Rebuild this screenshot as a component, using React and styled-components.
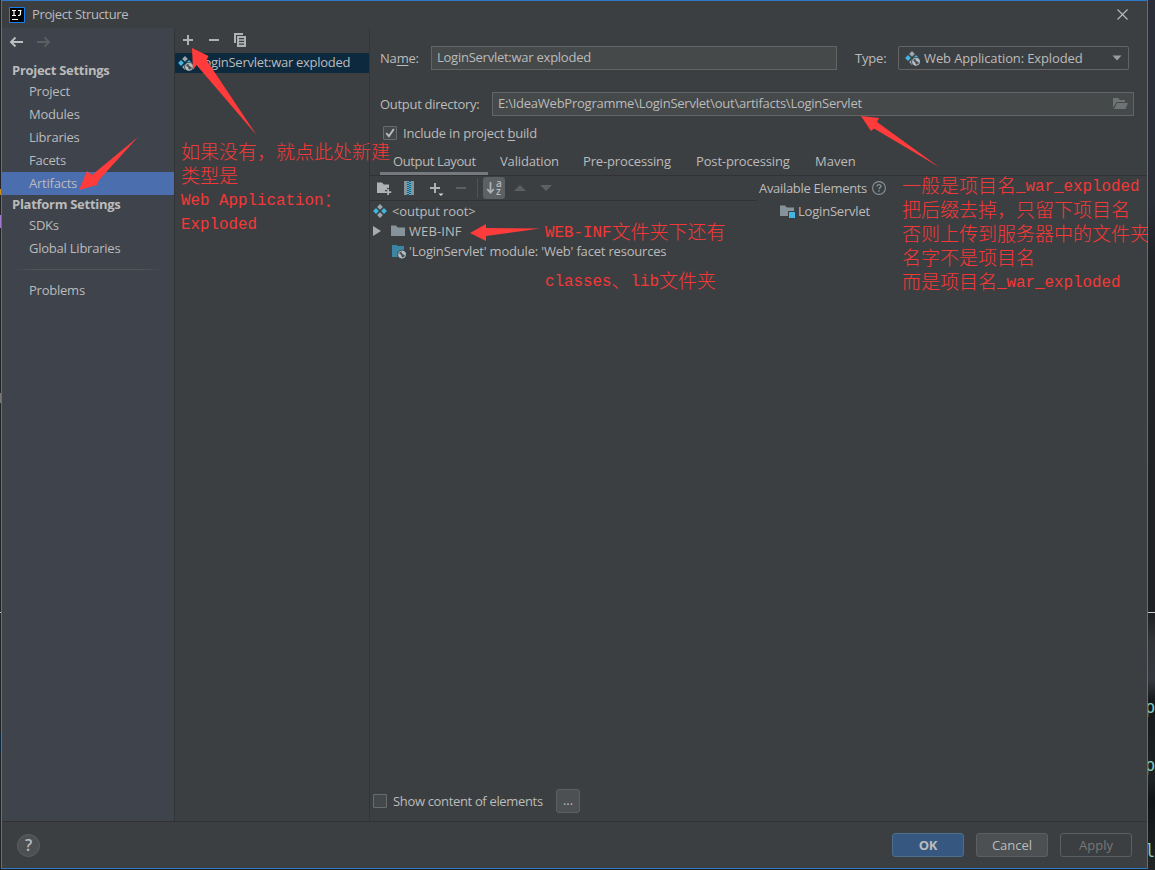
import React, { useState } from 'react';
import styled, { createGlobalStyle } from 'styled-components';

const projectSettings = ['Project', 'Modules', 'Libraries', 'Facets', 'Artifacts'];
const platformSettings = ['SDKs', 'Global Libraries'];

const tabs = [
  { name: 'Output Layout', width: 108, spacing: -0.38 },
  { name: 'Validation', width: 83, spacing: -0.15 },
  { name: 'Pre-processing', width: 113, spacing: -0.15 },
  { name: 'Post-processing', width: 119, spacing: -0.15 },
  { name: 'Maven', width: 66, spacing: 0 },
];

function ArtifactIcon({ web }) {
  return (
    <svg width="16" height="16" viewBox={web ? '1 0 16 16' : '0 0 16 16'}>
      <path d="M8 1l2.900 2.900L8 6.800 5.100 3.900z" fill="#9aa7b0" />
      <path d="M4 5.100L6.900 8 4 10.900 1.100 8z" fill="#40b6e0" />
      <path d="M12 5.100L14.900 8 12 10.900 9.100 8z" fill="#40b6e0" />
      <path d="M8 9.200l2.900 2.900L8 15l-2.900-2.900z" fill="#9aa7b0" />
      {web && <GlobeShape cx={12} cy={11.7} />}
    </svg>
  );
}

function GlobeShape({ cx, cy }) {
  return (
    <g transform={`translate(${cx} ${cy})`}>
      <circle r="4.8" fill="#33404a" />
      <circle r="3.6" fill="#4c5154" stroke="#b4bdc3" strokeWidth="1" />
      <path d="M-3.500-1.200L-1 .2l.4 1.600L.5 3.400-.6 3.800-2.800 2.500zM.2-3.500L-.6-1.800.8-.6 2.200.6l1.200-.4V-1.800L1.800-3.300z" fill="#b4bdc3" />
    </g>
  );
}

function FolderIcon({ kind }) {
  const fill = kind === 'add' ? '#afb1b3' : '#87939a';
  return (
    <svg width="16" height="16" viewBox="0 0 16 16">
      {kind === 'add' && (
        <path d="M1 2.500h5l1.800 2H13V8h-2v2H9v3H1zM11.200 9H13v2.200h2.200V13H13v2h-1.800v-2H9v-1.800h2.200z" fill={fill} />
      )}
      {kind === 'module' && (
        <g>
          <path d="M1 2.500h5l1.800 2H15V8H9v5H1z" fill={fill} />
          <path d="M10 9h6v6h-6z" fill="#40b6e0" />
        </g>
      )}
      {!kind && <path d="M1 2.500h5l1.800 2H15V13H1z" fill={fill} />}
    </svg>
  );
}

function CheckBox({ checked }) {
  return (
    <Box>
      {checked && (
        <svg width="12" height="12" viewBox="0 0 12 12">
          <path d="M2.300 6.200l2.600 3L9.800 2" fill="none" stroke="#bbbbbb" strokeWidth="1.900" />
        </svg>
      )}
    </Box>
  );
}

function Sidebar({ selected, onSelect }) {
  const item = (name) => (
    <SideItem key={name} $active={selected === name} onClick={() => onSelect(name)}>
      {name}
    </SideItem>
  );
  return (
    <Side>
      <History>
        <svg width="15" height="12" viewBox="0 0 15 12">
          <path d="M14 6H2M6.500 1.500L2 6l4.500 4.500" fill="none" stroke="#bdbfc1" strokeWidth="1.900" />
        </svg>
        <svg width="15" height="12" viewBox="0 0 15 12">
          <path d="M1 6h12M8.500 1.500L13 6l-4.500 4.500" fill="none" stroke="#5c5e61" strokeWidth="1.900" />
        </svg>
      </History>
      <SideTitle>Project Settings</SideTitle>
      {projectSettings.map(item)}
      <SideTitle>Platform Settings</SideTitle>
      {platformSettings.map(item)}
      <SideLine />
      {item('Problems')}
    </Side>
  );
}

function ArtifactList() {
  return (
    <List>
      <ListTools>
        <svg width="12" height="12" viewBox="0 0 12 12">
          <path d="M5 1h2v4h4v2H7v4H5V7H1V5h4z" fill="#afb1b3" />
        </svg>
        <svg width="12" height="12" viewBox="0 0 12 12">
          <path d="M1 5h10v2H1z" fill="#afb1b3" />
        </svg>
        <svg width="14" height="14" viewBox="0 0 14 14">
          <path d="M1 0h9v2H3v8H1z" fill="#afb1b3" />
          <path d="M4 3h9v11H4zM6 5v1.200h5V5zM6 7.800V9h5V7.800zM6 10.600v1.200h5v-1.200z" fill="#afb1b3" fillRule="evenodd" />
        </svg>
      </ListTools>
      <ListItem>
        <ArtifactIcon web />
        <Text $spacing={-0.28}>LoginServlet:war exploded</Text>
      </ListItem>
    </List>
  );
}

function LayoutTools() {
  return (
    <Tools>
      <FolderIcon kind="add" />
      <Tool $shift={-1} width="16" height="16" viewBox="0 0 16 16">
        <path d="M3 1h10v14H3z" fill="#87939a" />
        <path d="M6 1h4v14H6z" fill="#315665" />
        <path d="M7 1v14M9 2v14" stroke="#40b6e0" strokeWidth="2" strokeDasharray="1 1" />
      </Tool>
      <Tool $shift={2} width="16" height="16" viewBox="0 0 16 16">
        <path d="M5 3h2v4h4v2H7v4H5V9H1V7h4z" fill="#afb1b3" />
        <path d="M9.500 13.500h5L12 16z" fill="#d5d6d7" />
      </Tool>
      <svg width="16" height="16" viewBox="0 0 16 16">
        <path d="M1 7h10v2H1z" fill="#5d6062" />
      </svg>
      <ToolLine />
      <SortButton>
        <svg width="9" height="14" viewBox="0 0 9 14">
          <path d="M4.500 1v10M1.200 8.200l3.300 3.500 3.300-3.500" fill="none" stroke="#afb1b3" strokeWidth="1.700" />
        </svg>
        <SortLetters>
          <span>a</span>
          <span>z</span>
        </SortLetters>
      </SortButton>
      <Tool $shift={-1} width="12" height="6" viewBox="0 0 12 6">
        <path d="M0 6l6-6 6 6z" fill="#5d6062" />
      </Tool>
      <Tool $shift={4} width="12" height="6" viewBox="0 0 12 6">
        <path d="M0 0l6 6 6-6z" fill="#5d6062" />
      </Tool>
    </Tools>
  );
}

function Editor() {
  const [tab, setTab] = useState('Output Layout');
  return (
    <Main>
      <NameRow>
        <Label $width={51}>
          Na<u>m</u>e:
        </Label>
        <Field $width={406}>
          <Text $spacing={-0.25}>LoginServlet:war exploded</Text>
        </Field>
        <TypeLabel>Type:</TypeLabel>
        <Select>
          <ArtifactIcon web />
          <Text $spacing={-0.12}>Web Application: Exploded</Text>
          <svg width="10" height="6" viewBox="0 0 10 6">
            <path d="M.5.500h9L5 5.500z" fill="#9a9da0" />
          </svg>
        </Select>
      </NameRow>
      <DirRow>
        <Label $width={112}>
          <Text $spacing={-0.3}>Output directory:</Text>
        </Label>
        <Field $width={642}>
          <Text $spacing={-0.24}>E:\IdeaWebProgramme\LoginServlet\out\artifacts\LoginServlet</Text>
          <svg width="16" height="12" viewBox="0 0 16 12">
            <path d="M1 0h5l2 2h5v2H4.500L1 10z" fill="#6e7375" />
            <path d="M5 5h11l-2.500 6H2z" fill="#6e7375" />
          </svg>
        </Field>
      </DirRow>
      <BuildRow>
        <CheckBox checked />
        <span>
          Include in project <u>b</u>uild
        </span>
      </BuildRow>
      <Tabs>
        {tabs.map((t) => (
          <Tab key={t.name} $width={t.width} $spacing={t.spacing} $active={t.name === tab} onClick={() => setTab(t.name)}>
            {t.name}
          </Tab>
        ))}
      </Tabs>
      <Panes>
        <Pane $width={387}>
          <LayoutTools />
          <TreeRow $indent={2} $gap={4}>
            <ArtifactIcon />
            <Text $spacing={-0.1}>&lt;output root&gt;</Text>
          </TreeRow>
          <TreeRow $indent={3} $gap={3}>
            <Expander width="8" height="10" viewBox="0 0 8 10">
              <path d="M0 0l8 5-8 5z" fill="#a9abad" />
            </Expander>
            <FolderIcon />
            <Text $spacing={0.1}>WEB-INF</Text>
          </TreeRow>
          <TreeRow $indent={21} $gap={2}>
            <svg width="16" height="16" viewBox="0 0 16 16">
              <path d="M1 2h5v1h7v11H1z" fill="#3b86a5" />
              <GlobeShape cx={11} cy={11.5} />
            </svg>
            <Text $spacing={-0.19}>'LoginServlet' module: 'Web' facet resources</Text>
          </TreeRow>
        </Pane>
        <Pane>
          <Available>
            <Text $spacing={-0.31}>Available Elements</Text>
            <svg width="14" height="14" viewBox="0 0 14 14">
              <circle cx="7" cy="7" r="6.400" fill="none" stroke="#87939a" strokeWidth="1.100" />
              <path d="M5 5.500C5 3 9 3 9 5.300 9 6.700 7 6.600 7 8.300M7 9.300v1.500" fill="none" stroke="#87939a" strokeWidth="1.300" />
            </svg>
          </Available>
          <TreeRow $indent={22} $gap={3}>
            <FolderIcon kind="module" />
            <span>LoginServlet</span>
          </TreeRow>
        </Pane>
      </Panes>
      <ContentRow>
        <CheckBox />
        <ContentLabel>Show content of elements</ContentLabel>
        <MoreButton>...</MoreButton>
      </ContentRow>
    </Main>
  );
}

function Notes() {
  return (
    <>
      <Arrows width="1155" height="870" viewBox="0 0 1155 870">
        <path d="M192 48l16.500 8-2 4 50 75-60-70-3.500 5z" />
        <path d="M79 190l8-19 5 4 46-38-39 43-2 5z" />
        <path d="M470 233l16-9v4l54 .500-54 7.500v5z" />
        <path d="M861 116l18 2-2 4 62 45-65-38.500-3 2.500z" />
      </Arrows>
      <Note $x={181} $y={139}>
        <p>如果没有，就点此处新建</p>
        <p>类型是</p>
        <p><b>Web Application</b>：</p>
        <p><b>Exploded</b></p>
      </Note>
      <Note $x={545} $y={219}>
        <p><b>WEB-INF</b>文件夹下还有</p>
      </Note>
      <Note $x={545} $y={268}>
        <p><b>classes</b>、<b>lib</b>文件夹</p>
      </Note>
      <Note $x={902} $y={173}>
        <p>一般是项目名<b>_war_exploded</b></p>
        <p>把后缀去掉，只留下项目名</p>
        <p>否则上传到服务器中的文件夹</p>
        <p>名字不是项目名</p>
        <p>而是项目名<b>_war_exploded</b></p>
      </Note>
    </>
  );
}

function App() {
  const [selected, setSelected] = useState('Artifacts');
  return (
    <Desktop>
      <GlobalStyle />
      <LeftEdge>
        <Speck $top={189} $height={6} $color="#d08a10" />
        <Speck $top={215} $height={13} $color="#a678cf" />
        <Speck $top={393} $height={10} $color="#777777" />
        <Speck $top={612} $height={1} $color="#cccccc" />
        <Speck $top={733} $height={20} $color="#0d293e" />
      </LeftEdge>
      <Dialog>
        <TitleBar>
          <Logo width="16" height="16" viewBox="0 0 16 16">
            <path d="M.5.500h15v15H.5z" fill="#000" stroke="#1d7dea" />
            <path d="M3 3.500h4M5 3.500v4.500M3 8.500h4M9 3.500h3.500M11.500 3.500V7q0 1.500-2.500 1.500M3 12.500h6" fill="none" stroke="#fff" strokeWidth="1.200" />
          </Logo>
          <Title>Project Structure</Title>
          <svg width="11" height="11" viewBox="0 0 11 11">
            <path d="M.5.500l10 10M10.500.500l-10 10" stroke="#bbbbbb" strokeWidth="1.100" />
          </svg>
        </TitleBar>
        <Body>
          <Sidebar selected={selected} onSelect={setSelected} />
          <ArtifactList />
          <Editor />
        </Body>
        <Footer>
          <Help>?</Help>
          <Button $primary>OK</Button>
          <Button>Cancel</Button>
          <Button $disabled>Apply</Button>
        </Footer>
      </Dialog>
      <RightEdge>
        <Speck $top={612} $height={1} $color="#cccccc" />
        <EdgeLetter $top={697}>p</EdgeLetter>
        <EdgeLetter $top={755}>p</EdgeLetter>
        <EdgeLetter $top={841}>l</EdgeLetter>
      </RightEdge>
      <Notes />
    </Desktop>
  );
}

export default App;

const GlobalStyle = createGlobalStyle`
  * {
    box-sizing: border-box;
  }
  body {
    margin: 0;
    background: #1e2023;
    overflow: hidden;
  }
  svg {
    display: block;
    flex: none;
  }
  p {
    margin: 0;
  }
  u {
    text-underline-offset: 2px;
  }
`;

const Desktop = styled.div`
  position: relative;
  display: flex;
  width: 1155px;
  height: 870px;
  overflow: hidden;
  background: #1e2023;
  font-family: 'Open Sans', 'Noto Sans', sans-serif;
  font-size: 13px;
  letter-spacing: -0.2px;
  line-height: 20px;
  color: #bbbbbb;
  white-space: nowrap;
`;

const LeftEdge = styled.div`
  position: relative;
  width: 1px;
  background: #222426;
`;

const RightEdge = styled.div`
  position: relative;
  flex: 1;
  overflow: hidden;
  background: linear-gradient(#2b2e39 0, #292d36 200px, #202226 260px, #1e2023 612px, #303236 640px, #34383e 680px, #16191b 700px, #1c2124 780px, #101315 800px, #222526 870px);
`;

const Speck = styled.div`
  position: absolute;
  left: 0;
  right: 0;
  top: ${(props) => props.$top}px;
  height: ${(props) => props.$height}px;
  background: ${(props) => props.$color};
`;

const EdgeLetter = styled.div`
  position: absolute;
  left: -3px;
  top: ${(props) => props.$top}px;
  font: 17px/20px 'DejaVu Sans Mono', monospace;
  color: #80cbc4;
`;

const Dialog = styled.div`
  display: flex;
  flex-direction: column;
  width: 1147px;
  height: 869px;
  border: 1px solid #3078c8;
  background: #3c3f41;
`;

const Text = styled.span`
  letter-spacing: ${(props) => props.$spacing}px;
`;

const TitleBar = styled.div`
  display: flex;
  align-items: center;
  height: 27px;
  padding: 0 19px 0 7px;
`;

const Logo = styled.svg`
  margin-right: 7px;
`;

const Title = styled.span`
  flex: 1;
  padding-bottom: 1px;
  letter-spacing: -0.36px;
`;

const Body = styled.div`
  display: flex;
  height: 793px;
`;

const Side = styled.div`
  width: 172px;
  background: #3e434c;
`;

const History = styled.div`
  display: flex;
  align-items: center;
  gap: 12px;
  height: 33px;
  padding: 0 0 5px 7px;
`;

const SideTitle = styled.div`
  height: 19px;
  padding-left: 10px;
  line-height: 19px;
  font-weight: 700;
  letter-spacing: -0.28px;
`;

const SideItem = styled.div`
  height: 23px;
  padding-left: 27px;
  line-height: 23px;
  letter-spacing: -0.23px;
  background: ${(props) => (props.$active ? '#4b6eaf' : 'transparent')};
`;

const SideLine = styled.div`
  height: 1px;
  margin: 9px 7px;
  background: linear-gradient(90deg, transparent, #53565b 20%, #53565b 80%, transparent);
`;

const List = styled.div`
  width: 196px;
  border-left: 1px solid #323435;
  border-right: 1px solid #323435;
`;

const ListTools = styled.div`
  display: flex;
  align-items: center;
  gap: 14px;
  height: 25px;
  padding: 0 0 2px 7px;
  svg:last-child {
    margin-left: -1px;
  }
`;

const ListItem = styled.div`
  display: flex;
  align-items: center;
  gap: 3px;
  height: 20px;
  padding-left: 3px;
  background: #0d293e;
  span {
    padding-bottom: 2px;
  }
`;

const Main = styled.div`
  display: flex;
  flex-direction: column;
  flex: 1;
`;

const NameRow = styled.div`
  display: flex;
  align-items: center;
  height: 24px;
  margin: 18px 0 0 10px;
  line-height: 18px;
`;

const DirRow = styled(NameRow)`
  margin-top: 22px;
`;

const Label = styled.div`
  width: ${(props) => props.$width}px;
`;

const TypeLabel = styled.div`
  width: 43px;
  margin-left: 18px;
`;

const Field = styled.div`
  display: flex;
  align-items: center;
  justify-content: space-between;
  width: ${(props) => props.$width}px;
  height: 24px;
  padding: 0 5px;
  border: 1px solid #646464;
  background: #45494a;
  span {
    padding-bottom: 2px;
  }
`;

const Select = styled.div`
  display: flex;
  align-items: center;
  gap: 3px;
  width: 231px;
  height: 24px;
  padding: 0 6px;
  border: 1px solid #646464;
  border-radius: 2px;
  span {
    flex: 1;
  }
`;

const BuildRow = styled.div`
  display: flex;
  align-items: center;
  gap: 6px;
  height: 20px;
  margin: 7px 0 0 13px;
`;

const Box = styled.div`
  width: 14px;
  height: 14px;
  border: 1px solid #6b6b6b;
  border-radius: 1px;
  background: #43494a;
`;

const Tabs = styled.div`
  display: flex;
  height: 33px;
  padding-left: 10px;
  border-bottom: 1px solid #323232;
`;

const Tab = styled.div`
  width: ${(props) => props.$width}px;
  height: 32px;
  padding: 8px 0 0 ${(props) => (props.$active ? 13 : 12)}px;
  border-bottom: 3px solid ${(props) => (props.$active ? '#747a80' : 'transparent')};
  letter-spacing: ${(props) => props.$spacing}px;
`;

const Panes = styled.div`
  display: flex;
  flex: 1;
`;

const Pane = styled.div`
  width: ${(props) => (props.$width ? props.$width + 'px' : 'auto')};
`;

const Tools = styled.div`
  display: flex;
  align-items: center;
  gap: 10px;
  height: 25px;
  padding-left: 6px;
  border-bottom: 1px solid #323232;
`;

const Tool = styled.svg`
  margin-left: ${(props) => props.$shift}px;
`;

const ToolLine = styled.div`
  width: 1px;
  height: 20px;
  margin-left: -4px;
  background: #515151;
`;

const SortButton = styled.div`
  display: flex;
  align-items: center;
  gap: 1px;
  width: 22px;
  height: 22px;
  margin-left: -5px;
  padding-left: 3px;
  border-radius: 3px;
  background: #5c6164;
`;

const SortLetters = styled.div`
  display: flex;
  flex-direction: column;
  padding-bottom: 2px;
  font-size: 10px;
  font-weight: 600;
  line-height: 8px;
`;

const TreeRow = styled.div`
  display: flex;
  align-items: center;
  gap: ${(props) => props.$gap}px;
  height: 20px;
  padding-left: ${(props) => props.$indent}px;
`;

const Expander = styled.svg`
  margin-right: 6px;
`;

const Available = styled.div`
  display: flex;
  align-items: center;
  gap: 5px;
  height: 24px;
  margin-bottom: 1px;
  padding-left: 2px;
`;

const ContentRow = styled.div`
  display: flex;
  align-items: center;
  gap: 6px;
  height: 24px;
  margin: 0 0 8px 3px;
`;

const ContentLabel = styled.div`
  width: 157px;
  letter-spacing: -0.34px;
`;

const MoreButton = styled.div`
  width: 24px;
  height: 24px;
  border: 1px solid #5e6060;
  border-radius: 3px;
  background: #4c5052;
  letter-spacing: 0;
  text-align: center;
`;

const Footer = styled.div`
  display: flex;
  align-items: center;
  gap: 12px;
  flex: 1;
  padding: 0 15px 0 15px;
  border-top: 1px solid #323232;
`;

const Help = styled.div`
  width: 23px;
  height: 23px;
  margin-right: auto;
  border: 1px solid #5e6060;
  border-radius: 50%;
  background: #4c5052;
  font-size: 16px;
  font-weight: 600;
  line-height: 21px;
  text-align: center;
`;

const Button = styled.div`
  width: 72px;
  height: 24px;
  border: 1px solid ${(props) => (props.$primary ? '#4c708c' : '#5e6060')};
  border-radius: 3px;
  background: ${(props) => (props.$primary ? '#365880' : props.$disabled ? 'transparent' : '#4c5052')};
  color: ${(props) => (props.$disabled ? '#777777' : '#bbbbbb')};
  font-weight: ${(props) => (props.$primary ? 700 : 400)};
  letter-spacing: ${(props) => (props.$primary ? -0.2 : 0)}px;
  line-height: 23px;
  text-align: center;
`;

const Arrows = styled.svg`
  position: absolute;
  left: 0;
  top: 0;
  fill: #ff3b3b;
  pointer-events: none;
`;

const Note = styled.div`
  position: absolute;
  left: ${(props) => props.$x}px;
  top: ${(props) => props.$y}px;
  font-family: 'Noto Sans CJK SC', sans-serif;
  font-size: 19px;
  font-weight: 300;
  letter-spacing: 0;
  line-height: 24px;
  color: #f43838;
  p {
    height: 24px;
  }
  b {
    font-family: 'Liberation Mono', monospace;
    font-size: 15.83px;
    font-weight: 400;
    line-height: 1;
    vertical-align: 2px;
  }
`;
